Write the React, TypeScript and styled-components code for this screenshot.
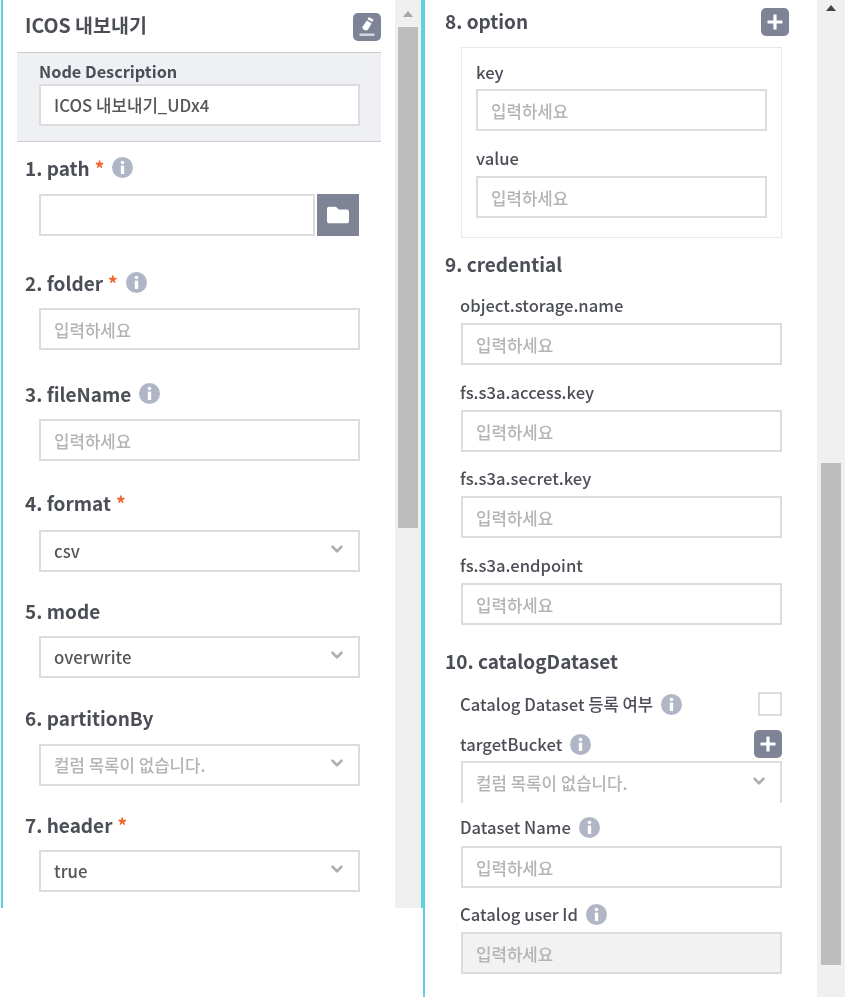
import React from 'react';
import styled, { createGlobalStyle } from 'styled-components';
import { ChevronDown } from 'lucide-react';
import { FaFolder } from 'react-icons/fa';

const GlobalStyle = createGlobalStyle`
  html, body {
    margin: 0;
    padding: 0;
    background: #fff;
  }
  * {
    box-sizing: border-box;
  }
`;

const Page = styled.div`
  display: flex;
  align-items: flex-start;
  width: 845px;
  height: 997px;
  padding-left: 1px;
  overflow: hidden;
  font-family: 'Noto Sans CJK KR', 'Noto Sans', sans-serif;
  color: #4b4e57;
  filter: blur(0.5px);
`;

const Panel = styled.section<{ $width: number; $height: number; $closed?: boolean }>`
  display: flex;
  flex: none;
  width: ${(p) => p.$width}px;
  height: ${(p) => p.$height}px;
  border-left: 2px solid #5fd0de;
  border-right: ${(p) => (p.$closed ? '2px solid #5fd0de' : 'none')};
`;

const Content = styled.div`
  flex: 1;
  min-width: 0;
`;

const Track = styled.div<{ $width: number }>`
  flex: none;
  display: flex;
  flex-direction: column;
  align-items: center;
  width: ${(p) => p.$width}px;
  background: #f0f0f0;
`;

const Arrow = styled.div<{ $color: string; $top: number }>`
  width: 0;
  height: 0;
  margin-top: ${(p) => p.$top}px;
  border-left: 5px solid transparent;
  border-right: 5px solid transparent;
  border-bottom: 6px solid ${(p) => p.$color};
`;

const Thumb = styled.div<{ $top: number; $height: number }>`
  width: 20px;
  height: ${(p) => p.$height}px;
  margin-top: ${(p) => p.$top}px;
  background: #bdbdbd;
`;

const TitleRow = styled.header`
  display: flex;
  align-items: center;
  justify-content: space-between;
  height: 52px;
  padding: 2px 14px 0 22px;
`;

const Title = styled.h1`
  margin: 0 0 5px;
  font-size: 19.5px;
  font-weight: 700;
  line-height: 24px;
`;

const SquareButton = styled.button<{ $size?: number; $square?: boolean }>`
  display: flex;
  align-items: center;
  justify-content: center;
  flex: none;
  width: ${(p) => p.$size ?? 28}px;
  height: ${(p) => p.$size ?? 28}px;
  padding: 0;
  border: none;
  border-radius: ${(p) => (p.$square ? 0 : 5)}px;
  background: #7e8396;
  color: #fff;
`;

const DescriptionBox = styled.div`
  width: 364px;
  margin-left: 14px;
  padding: 7px 21px 15px 22px;
  background: #eff0f4;
  border-top: 1.5px solid #ccc;
  border-bottom: 1.5px solid #ccc;
`;

const Heading = styled.h2<{ $top: number; $after: number; $left?: number }>`
  display: flex;
  align-items: center;
  height: 24px;
  padding-bottom: 2px;
  margin: ${(p) => p.$top}px 0 ${(p) => p.$after}px ${(p) => p.$left ?? 22}px;
  font-size: 19px;
  font-weight: 700;
`;

const HeadingRow = styled.div<{ $top: number; $after: number }>`
  display: flex;
  align-items: center;
  justify-content: space-between;
  height: 28px;
  margin: ${(p) => p.$top}px 28px ${(p) => p.$after}px 20px;
  font-size: 19px;
  font-weight: 700;
`;

const HeadingText = styled.span`
  margin-bottom: 4px;
`;

const Required = styled.span`
  margin-left: 5px;
  color: #f0622a;
  font-size: 19px;
  font-weight: 700;
  line-height: 1;
`;

const Label = styled.div<{ $top: number; $after: number; $left?: number; $strong?: boolean }>`
  display: flex;
  align-items: center;
  height: 24px;
  padding-bottom: 2px;
  margin: ${(p) => p.$top}px 0 ${(p) => p.$after}px ${(p) => p.$left ?? 0}px;
  font-size: ${(p) => (p.$strong ? 16.3 : 16.6)}px;
  font-weight: ${(p) => (p.$strong ? 700 : 500)};
`;

const InfoBadge = styled.svg`
  flex: none;
  width: 21px;
  height: 21px;
  margin-left: 8px;
`;

const TextInput = styled.input<{ $disabled?: boolean }>`
  display: block;
  width: 100%;
  height: 42px;
  padding: 0 13px;
  border: 2px solid #dcdcdc;
  border-radius: 0;
  outline: none;
  background: ${(p) => (p.$disabled ? '#f2f2f2' : '#fff')};
  color: #555;
  font-family: inherit;
  font-size: 16.8px;
  font-weight: 500;
  &:placeholder-shown {
    padding-top: 2px;
  }
  &::placeholder {
    color: #b4b4b4;
    opacity: 1;
  }
`;

const Indented = styled.div`
  width: 321px;
  margin-left: 36px;
`;

const PathRow = styled.div`
  display: flex;
  gap: 2px;
  width: 320px;
  margin-left: 36px;
`;

const SelectBox = styled.div<{ $clipped?: boolean; $muted?: boolean }>`
  display: flex;
  align-items: center;
  justify-content: space-between;
  height: 42px;
  padding: 0 12px 1px 13px;
  border: 2px solid #dcdcdc;
  border-bottom: ${(p) => (p.$clipped ? 'none' : '2px solid #dcdcdc')};
  color: ${(p) => (p.$muted ? '#b4b4b4' : '#555')};
  font-size: 16.8px;
  font-weight: 500;
  svg {
    color: #b0b0b0;
    margin-top: -3px;
  }
`;

const OptionBox = styled.div`
  width: 321px;
  margin-left: 36px;
  padding: 13px 14px 19px;
  border: 1.5px solid #e8e8e8;
`;

const CheckRow = styled.div`
  display: flex;
  align-items: center;
  justify-content: space-between;
  height: 24px;
  margin-top: 19px;
  font-size: 16.6px;
  font-weight: 500;
`;

const Inline = styled.span`
  display: flex;
  align-items: center;
  margin-left: -1px;
`;

const CheckBox = styled.div`
  width: 24px;
  height: 24px;
  border: 2px solid #dcdcdc;
`;

const BucketRow = styled.div`
  display: flex;
  align-items: center;
  justify-content: space-between;
  height: 28px;
  margin: 14px 0 3px;
  font-size: 16.6px;
  font-weight: 500;
`;

const Info = () => (
  <InfoBadge viewBox="0 0 20 20">
    <circle cx="10" cy="10" r="10" fill="#b1b6c6" />
    <circle cx="10" cy="5.2" r="1.7" fill="#fff" />
    <rect x="8.4" y="8.2" width="3.2" height="8" fill="#fff" />
  </InfoBadge>
);

const PenIcon = () => (
  <svg width="24" height="24" viewBox="0 0 24 24" fill="#fff">
    <path d="M13.8 2l4.8 2.8-1.3 2.3-4.8-2.8z" />
    <path d="M11.8 5.6l4.8 2.8-3.7 6.4-2.2 0.8-3-1.7-0.3-2z" />
    <rect x="4.5" y="18.5" width="15" height="2.4" opacity="0.7" />
  </svg>
);

const PlusIcon = () => (
  <svg width="18" height="18" viewBox="0 0 18 18" fill="#fff">
    <rect x="7.4" y="1.5" width="3.2" height="15" rx="0.6" />
    <rect x="1.5" y="7.4" width="15" height="3.2" rx="0.6" />
  </svg>
);

const Placeholder = ({ disabled }: { disabled?: boolean }) => (
  <TextInput readOnly placeholder="입력하세요" $disabled={disabled} />
);

const Select = ({ text, muted, clipped }: { text: string; muted?: boolean; clipped?: boolean }) => (
  <SelectBox $muted={muted} $clipped={clipped}>
    {text}
    <ChevronDown size={18} strokeWidth={3.5} />
  </SelectBox>
);

export default function App() {
  return (
    <Page>
      <GlobalStyle />
      <Panel $width={422} $height={908} $closed>
        <Content>
          <TitleRow>
            <Title>ICOS 내보내기</Title>
            <SquareButton>
              <PenIcon />
            </SquareButton>
          </TitleRow>
          <DescriptionBox>
            <Label $top={0} $after={0} $strong>Node Description</Label>
            <TextInput readOnly value="ICOS 내보내기_UDx4" />
          </DescriptionBox>

          <Heading $top={14} $after={14}>1. path<Required>*</Required><Info /></Heading>
          <PathRow>
            <TextInput readOnly />
            <SquareButton as="div" $size={42} $square>
              <FaFolder size={22} />
            </SquareButton>
          </PathRow>

          <Heading $top={35} $after={13}>2. folder<Required>*</Required><Info /></Heading>
          <Indented><Placeholder /></Indented>

          <Heading $top={32} $after={13}>3. fileName<Info /></Heading>
          <Indented><Placeholder /></Indented>

          <Heading $top={30} $after={15}>4. format<Required>*</Required></Heading>
          <Indented><Select text="csv" /></Indented>

          <Heading $top={27} $after={13}>5. mode</Heading>
          <Indented><Select text="overwrite" /></Indented>

          <Heading $top={28} $after={14}>6. partitionBy</Heading>
          <Indented><Select text="컬럼 목록이 없습니다." muted /></Indented>

          <Heading $top={27} $after={13}>7. header<Required>*</Required></Heading>
          <Indented><Select text="true" /></Indented>
        </Content>
        <Track $width={26}>
          <Arrow $color="#a8a8a8" $top={11} />
          <Thumb $top={10} $height={501} />
        </Track>
      </Panel>

      <Panel $width={422} $height={997}>
        <Content>
          <HeadingRow $top={8} $after={11}>
            <HeadingText>8. option</HeadingText>
            <SquareButton><PlusIcon /></SquareButton>
          </HeadingRow>
          <OptionBox>
            <Label $top={0} $after={4}>key</Label>
            <Placeholder />
            <Label $top={16} $after={5}>value</Label>
            <Placeholder />
          </OptionBox>

          <Heading $top={14} $after={0} $left={20}>9. credential</Heading>
          <Indented>
            <Label $top={18} $after={5} $left={-1}>object.storage.name</Label>
            <Placeholder />
            <Label $top={16} $after={5} $left={-1}>fs.s3a.access.key</Label>
            <Placeholder />
            <Label $top={15} $after={5} $left={-1}>fs.s3a.secret.key</Label>
            <Placeholder />
            <Label $top={16} $after={5} $left={-1}>fs.s3a.endpoint</Label>
            <Placeholder />
          </Indented>

          <Heading $top={24} $after={0} $left={20}>10. catalogDataset</Heading>
          <Indented>
            <CheckRow>
              <Inline>Catalog Dataset 등록 여부<Info /></Inline>
              <CheckBox />
            </CheckRow>
            <BucketRow>
              <Inline>targetBucket<Info /></Inline>
              <SquareButton><PlusIcon /></SquareButton>
            </BucketRow>
            <Select text="컬럼 목록이 없습니다." muted clipped />
            <Label $top={13} $after={6} $left={-1}>Dataset Name<Info /></Label>
            <Placeholder />
            <Label $top={15} $after={5} $left={-1}>Catalog user Id<Info /></Label>
            <Placeholder disabled />
          </Indented>
        </Content>
        <Track $width={28}>
          <Arrow $color="#444" $top={5} />
          <Thumb $top={452} $height={502} />
        </Track>
      </Panel>
    </Page>
  );
}
